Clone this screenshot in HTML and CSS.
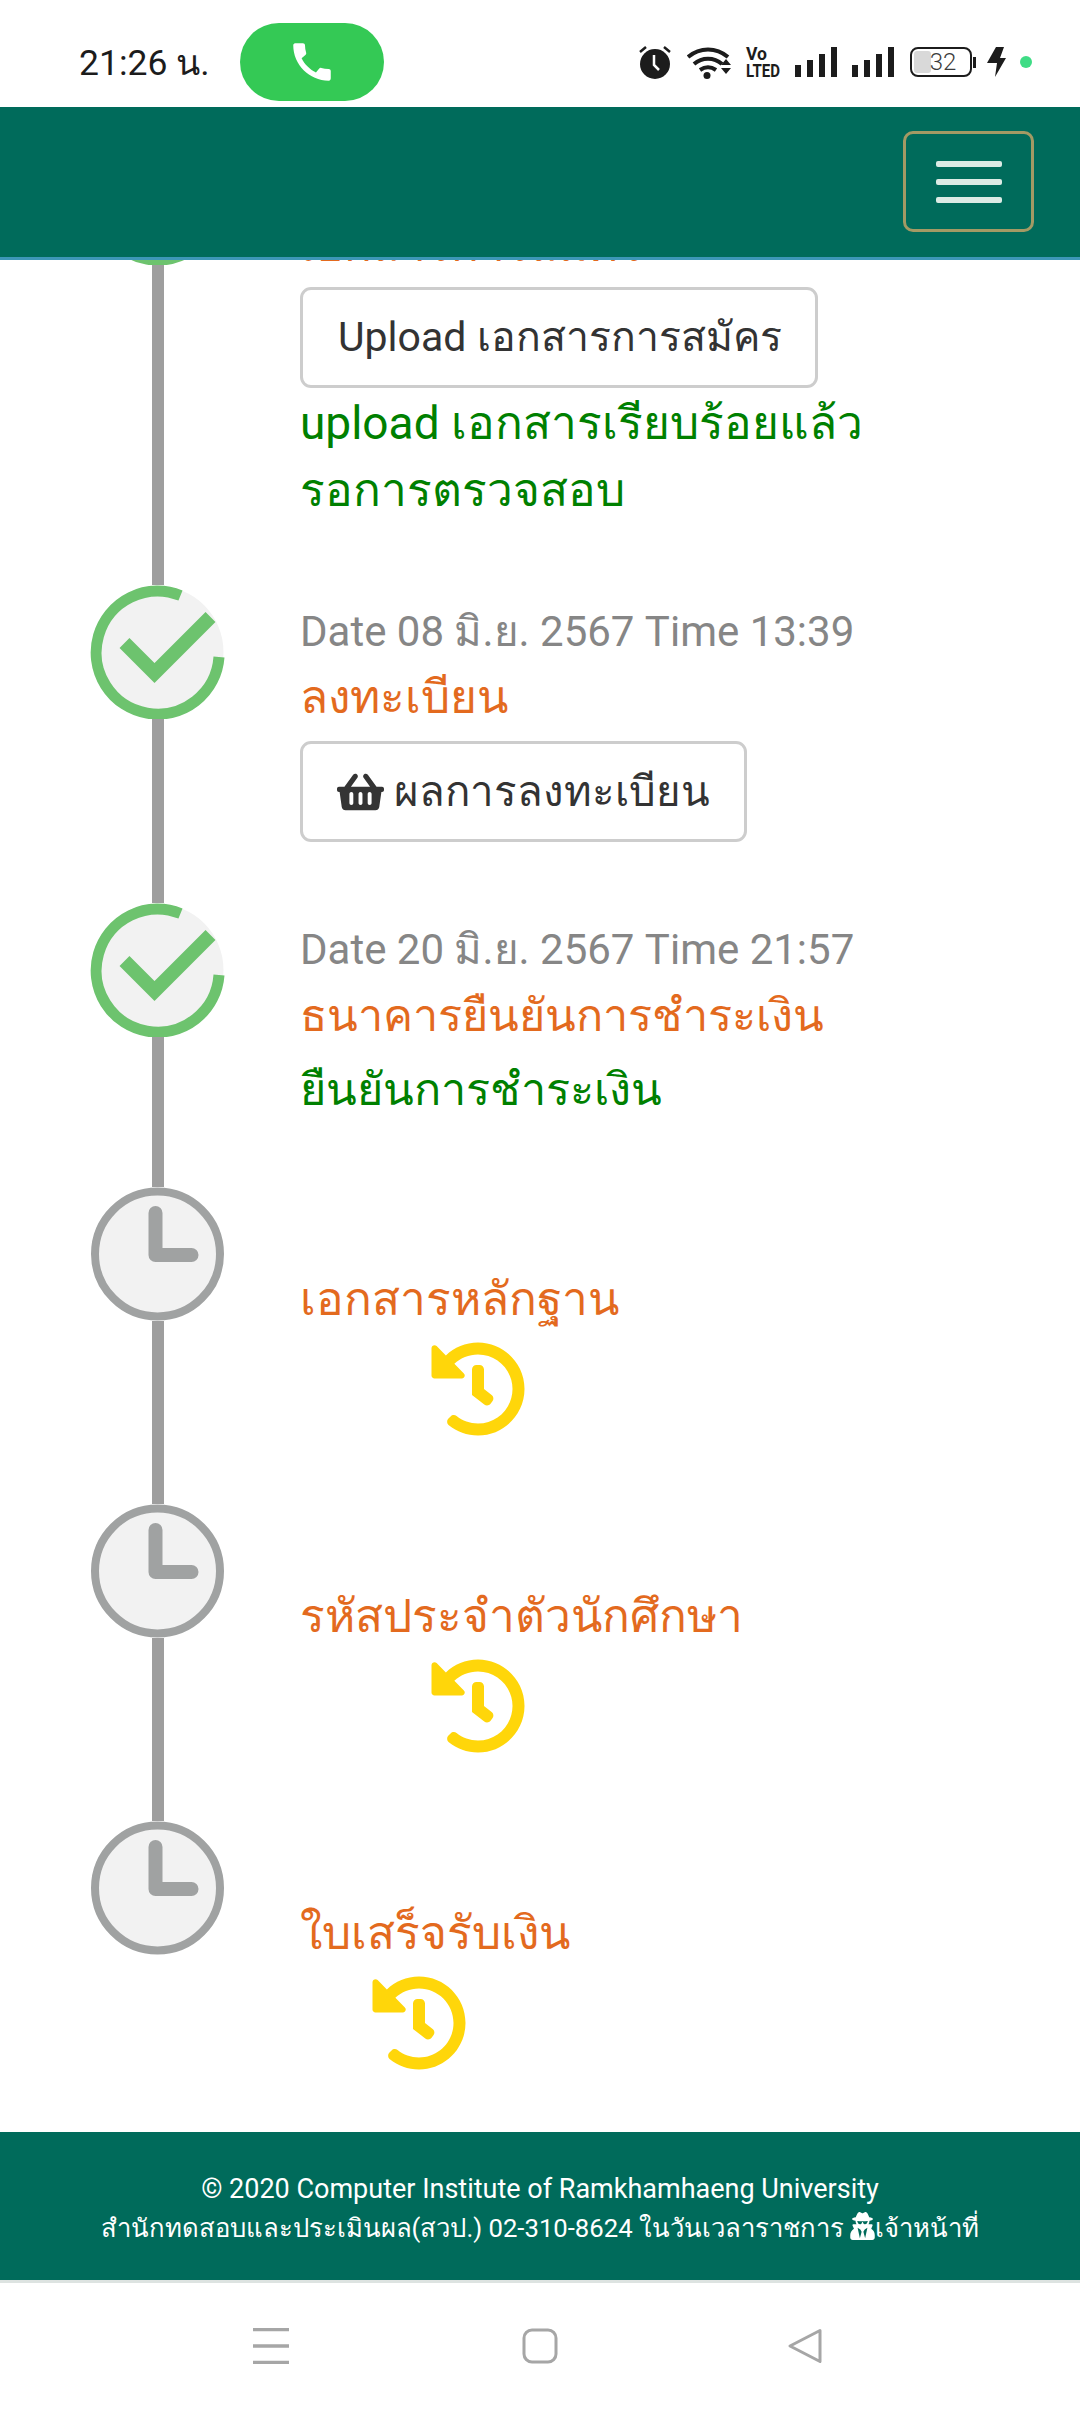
FILE: index.html
```html
<!DOCTYPE html>
<html lang="th">
<head>
<meta charset="utf-8">
<title>Timeline</title>
<link rel="stylesheet" href="styles.css">
</head>
<body>
<div class="status">
  <span class="time">21:26 น.</span>
  <span class="call"><svg class="call-ic" viewBox="0 0 24 24"><path fill="#fff" d="M20.01 15.38c-1.23 0-2.42-.2-3.53-.56-.35-.12-.74-.03-1.01.24l-1.57 1.97c-2.83-1.35-5.48-3.9-6.89-6.83l1.95-1.66c.27-.28.35-.67.24-1.02-.37-1.11-.56-2.3-.56-3.53 0-.54-.45-.99-.99-.99H4.19C3.65 3 3 3.24 3 3.99 3 13.28 10.73 21 20.01 21c.71 0 .99-.63.99-1.18v-3.45c0-.54-.45-.99-.99-.99z"/></svg></span>
  <div class="sys">
    <svg class="ic-alarm" viewBox="0 0 32 33"><circle cx="16" cy="18" r="15" fill="#1c1c1c"/><path d="M1 6l6-5M31 6l-6-5" stroke="#1c1c1c" stroke-width="2.5"/><path d="M15 9v10l5 5" fill="none" stroke="#fff" stroke-width="2.5"/></svg>
    <svg class="ic-wifi" viewBox="0 0 45 33"><path d="M1 11C13 1 29 1 41 11M7 18c8-7 20-7 28 0M13 24c5-3.500 11-3.500 16 0" fill="none" stroke="#1c1c1c" stroke-width="4"/><circle cx="20" cy="29.500" r="3.500" fill="#1c1c1c"/><path d="M34 19l5-6 5 6zM34 22l5 6 5-6z" fill="#1c1c1c"/></svg>
    <svg class="ic-volte" viewBox="0 -3 34 36"><text x="0" y="13" class="volte-t" textLength="21" lengthAdjust="spacingAndGlyphs">Vo</text><text x="0" y="30" class="volte-t" textLength="34" lengthAdjust="spacingAndGlyphs">LTED</text></svg>
    <svg class="ic-sig" viewBox="0 0 42 30"><path d="M0 18h6v12H0zM12 13h6v17h-6zM24 7h6v23h-6zM36 0h6v30h-6z" fill="#1c1c1c"/></svg>
    <svg class="ic-sig" viewBox="0 0 42 30"><path d="M0 18h6v12H0zM12 13h6v17h-6zM24 7h6v23h-6zM36 0h6v30h-6z" fill="#1c1c1c"/></svg>
    <span class="batt"><span class="batt-fill"></span><span class="batt-num">32</span></span><span class="batt-nub"></span>
    <svg class="ic-bolt" viewBox="0 0 19 30"><path d="M9 0h8l-4 11h6L8 30l2-14H0z" fill="#1c1c1c"/></svg>
    <span class="dot"></span>
  </div>
</div>

<nav class="nav">
  <button class="toggler"><span class="bar"></span><span class="bar"></span><span class="bar"></span></button>
</nav>

<main class="main">
  <div class="timeline">
    <section class="row row-first">
      <div class="marker"><svg class="badge" viewBox="0 0 134 134"><use href="#done"/></svg><span class="line"></span></div>
      <div class="body">
        <p class="date"></p>
        <p class="title">เอกสารการสมัคร</p>
        <a class="btn btn-upload">Upload เอกสารการสมัคร</a>
        <p class="ok">upload เอกสารเรียบร้อยแล้ว<br>รอการตรวจสอบ</p>
      </div>
    </section>
    <section class="row">
      <div class="marker"><svg class="badge" viewBox="0 0 134 134"><use href="#done"/></svg><span class="line"></span></div>
      <div class="body">
        <p class="date">Date 08 มิ.ย. 2567 Time 13:39</p>
        <p class="title">ลงทะเบียน</p>
        <a class="btn"><svg class="basket" viewBox="0 0 576 512"><path fill="#343434" d="M576 216v16c0 13.255-10.745 24-24 24h-8l-26.113 182.788C514.509 462.435 494.257 480 470.37 480H105.63c-23.887 0-44.139-17.565-47.518-41.212L32 256h-8c-13.255 0-24-10.745-24-24v-16c0-13.255 10.745-24 24-24h67.341l106.78-146.821c10.395-14.292 30.407-17.453 44.701-7.058 14.293 10.395 17.453 30.408 7.058 44.701L170.477 192h235.046L326.12 82.821c-10.395-14.292-7.234-34.306 7.059-44.701 14.291-10.395 34.306-7.235 44.701 7.058L484.659 192H552c13.255 0 24 10.745 24 24zM312 392V280c0-13.255-10.745-24-24-24s-24 10.745-24 24v112c0 13.255 10.745 24 24 24s24-10.745 24-24zm112 0V280c0-13.255-10.745-24-24-24s-24 10.745-24 24v112c0 13.255 10.745 24 24 24s24-10.745 24-24zm-224 0V280c0-13.255-10.745-24-24-24s-24 10.745-24 24v112c0 13.255 10.745 24 24 24s24-10.745 24-24z"/></svg> ผลการลงทะเบียน</a>
      </div>
    </section>
    <section class="row row-paid">
      <div class="marker"><svg class="badge" viewBox="0 0 134 134"><use href="#done"/></svg><span class="line"></span></div>
      <div class="body">
        <p class="date">Date 20 มิ.ย. 2567 Time 21:57</p>
        <p class="title">ธนาคารยืนยันการชำระเงิน</p>
        <p class="ok ok-tight">ยืนยันการชำระเงิน</p>
      </div>
    </section>
    <section class="row row-wait">
      <div class="marker"><svg class="badge" viewBox="0 0 134 134"><use href="#wait"/></svg><span class="line"></span></div>
      <div class="body">
        <p class="date"></p>
        <p class="title">เอกสารหลักฐาน</p>
        <svg class="hist hist-wide" viewBox="0 0 512 512"><use href="#history"/></svg>
      </div>
    </section>
    <section class="row row-wait">
      <div class="marker"><svg class="badge" viewBox="0 0 134 134"><use href="#wait"/></svg><span class="line"></span></div>
      <div class="body">
        <p class="date"></p>
        <p class="title">รหัสประจำตัวนักศึกษา</p>
        <svg class="hist hist-wide" viewBox="0 0 512 512"><use href="#history"/></svg>
      </div>
    </section>
    <section class="row row-last">
      <div class="marker"><svg class="badge" viewBox="0 0 134 134"><use href="#wait"/></svg></div>
      <div class="body">
        <p class="date"></p>
        <p class="title">ใบเสร็จรับเงิน</p>
        <svg class="hist hist-narrow" viewBox="0 0 512 512"><use href="#history"/></svg>
      </div>
    </section>
  </div>
</main>

<footer class="foot">
  <p class="foot-line foot-en">© 2020 Computer Institute of Ramkhamhaeng University</p>
  <p class="foot-line">สำนักทดสอบและประเมินผล(สวป.) 02-310-8624 ในวันเวลาราชการ <svg class="spy" viewBox="0 0 448 512"><path fill="#fff" d="M383.9 308.3l23.9-62.6c4-10.5-3.7-21.7-15-21.7h-58.5c11-18.9 17.8-40.6 17.8-64v-.3c39.2-7.8 64-19.1 64-31.7 0-13.3-27.3-25.1-70.1-33-9.2-32.8-27-65.8-40.6-82.8-9.5-11.9-25.9-15.6-39.5-8.8l-27.6 13.8c-9 4.5-19.6 4.5-28.6 0L182.1 3.4c-13.6-6.8-30-3.1-39.5 8.8-13.5 17-31.4 50-40.6 82.8-42.7 7.9-70 19.7-70 33 0 12.6 24.8 23.9 64 31.7v.3c0 23.4 6.8 45.1 17.8 64H56.3c-11.5 0-19.2 11.7-14.7 22.3l25.8 60.2C27.3 329.8 0 372.7 0 422.4v44.8C0 491.9 20.1 512 44.8 512h358.4c24.7 0 44.8-20.1 44.8-44.8v-44.8c0-48.4-25.8-90.4-64.1-114.1zM176 480l-41.6-192 49.6 32 24 40-32 120zm96 0l-32-120 24-40 49.6-32L272 480zm41.7-298.5c-3.9 11.9-7 24.6-16.5 33.4-10.1 9.3-48 22.4-64-25-2.8-8.4-15.4-8.4-18.3 0-17 50.2-56 32.4-64 25-9.500-8.800-12.700-21.500-16.500-33.400-.8-2.500-6.300-5.700-6.300-5.800v-10.800c28.300 3.600 61 5.800 96 5.800s67.700-2.200 96-5.800v10.800c-.1.1-5.600 3.200-6.400 5.800z"/></svg>เจ้าหน้าที่</p>
</footer>

<div class="softkeys">
  <svg class="key" viewBox="0 0 36 36"><path d="M0 1.500h36M0 18h36M0 34.500h36" stroke="#a6a6a6" stroke-width="3.500"/></svg>
  <svg class="key" viewBox="0 0 36 36"><rect x="2" y="2" width="32" height="32" rx="8" fill="none" stroke="#a6a6a6" stroke-width="3"/></svg>
  <svg class="key key-back" viewBox="0 0 36 36"><path d="M33 2.500 3 18l30 15.500z" fill="none" stroke="#a6a6a6" stroke-width="3" stroke-linejoin="round"/></svg>
</div>

<svg class="defs" aria-hidden="true">
  <defs>
    <g id="done">
      <circle cx="67" cy="67" r="66" fill="#f2f2f2"/>
      <path d="M128.500 72A61.500 61.500 0 1 1 90 10.500" fill="none" stroke="#6dc36e" stroke-width="11"/>
      <path d="M34 58 64 88 120 32" fill="none" stroke="#6dc36e" stroke-width="14"/>
    </g>
    <g id="wait">
      <circle cx="67" cy="67" r="62.500" fill="#f2f2f2" stroke="#a0a2a2" stroke-width="8"/>
      <path d="M65 26V68H101" fill="none" stroke="#a0a2a2" stroke-width="14" stroke-linecap="round" stroke-linejoin="round"/>
    </g>
    <path id="history" fill="#ffd60a" d="M504 255.531c.253 136.64-111.18 248.372-247.82 248.468-59.015.042-113.223-20.53-155.822-54.911-11.077-8.94-11.905-25.541-1.839-35.607l11.267-11.267c8.609-8.609 22.353-9.551 31.891-1.984C173.062 425.135 212.781 440 256 440c101.705 0 184-82.311 184-184 0-101.705-82.311-184-184-184-48.814 0-93.149 18.969-126.068 49.932l50.754 50.754c10.08 10.08 2.941 27.314-11.313 27.314H24c-8.837 0-16-7.163-16-16V38.627c0-14.254 17.234-21.393 27.314-11.314l49.372 49.372C129.209 34.136 189.552 8 256 8c136.81 0 247.747 110.78 248 247.531zm-180.912 78.784l9.823-12.63c8.138-10.463 6.253-25.542-4.21-33.679L288 256.349V152c0-13.255-10.745-24-24-24h-16c-13.255 0-24 10.745-24 24v135.651l65.409 50.874c10.463 8.137 25.541 6.253 33.679-4.21z"/>
  </defs>
</svg>
</body>
</html>
```
FILE: styles.css
```css
* { box-sizing: border-box; }
html, body { margin: 0; padding: 0; }
body {
  width: 1080px;
  height: 2412px;
  display: flex;
  flex-direction: column;
  overflow: hidden;
  background: #fff;
  font-family: Roboto, "Noto Sans", "Noto Sans CJK SC", sans-serif;
  color: #333;
}
p { margin: 0; }

/* status bar */
.status {
  height: 107px;
  flex: none;
  display: flex;
  align-items: center;
  padding-left: 79px;
  padding-top: 17px;
}
.time { font-size: 35.5px; color: #1c1c1c; width: 161px; white-space: nowrap; }
.call {
  width: 144px;
  height: 78px;
  border-radius: 39px;
  background: #34c955;
  display: flex;
  align-items: center;
  justify-content: center;
}
.call-ic { width: 50px; height: 50px; }
.sys {
  margin-left: auto;
  padding-right: 48px;
  display: flex;
  align-items: center;
}
.ic-alarm { width: 32px; height: 33px; margin-right: 16px; }
.ic-wifi { width: 45px; height: 33px; margin-right: 14px; }
.ic-volte { width: 34px; height: 36px; margin-right: 15px; overflow: visible; }
.volte-t { font-size: 19px; font-weight: 700; fill: #1c1c1c; }
.ic-sig { width: 42px; height: 30px; margin-right: 15px; }
.batt {
  width: 62px;
  height: 30px;
  border: 2.5px solid #1c1c1c;
  border-radius: 8px;
  margin-left: 1px;
  display: flex;
  align-items: center;
  justify-content: center;
  overflow: hidden;
  padding: 2px;
}
.batt-fill { flex: none; width: 17px; height: 100%; background: #d9d9d9; border-radius: 3px; margin-right: -17px; }
.batt-num { flex: 1; text-align: center; font-size: 24px; line-height: 24px; color: #3c3c3c; font-weight: 300; padding-left: 4px; }
.batt-nub { width: 3px; height: 11px; background: #1c1c1c; margin: 0 11px 0 1px; }
.ic-bolt { width: 19px; height: 30px; margin-right: 14px; }
.dot { width: 12px; height: 12px; border-radius: 50%; background: #3fdc85; }

/* navbar */
.nav {
  height: 153px;
  flex: none;
  background: #006b5b;
  border-bottom: 3px solid #3d97b8;
  display: flex;
  justify-content: flex-end;
  align-items: flex-start;
  padding: 24px 46px 0 0;
  position: relative;
  z-index: 1;
}
.toggler {
  width: 131px;
  height: 101px;
  padding: 0;
  background: transparent;
  border: 3px solid #a39a64;
  border-radius: 10px;
  display: flex;
  flex-direction: column;
  align-items: center;
  justify-content: center;
  gap: 12px;
}
.bar { width: 66px; height: 6px; border-radius: 2px; background: #dcebe5; }

/* timeline */
.main { flex: none; height: 1872px; overflow: hidden; }
.timeline { margin-top: -129px; }
.row { display: flex; }
.marker {
  width: 135px;
  margin-left: 90px;
  flex: none;
  display: flex;
  flex-direction: column;
  align-items: center;
}
.badge { width: 135px; height: 134px; flex: none; display: block; filter: blur(0.6px); }
.line { width: 12px; flex: 1; background: #9e9e9e; }
.body { margin-left: 75px; padding-top: 15px; padding-bottom: 61px; }
.row-paid .body { padding-bottom: 64px; }
.row-wait .body { padding-bottom: 67px; }
.row-last .body { padding-bottom: 0; }
.row-last { height: 309px; }
.date { height: 63px; font-size: 42px; line-height: 63px; color: #868686; white-space: nowrap; }
.title { margin-top: 1px; font-size: 46px; line-height: 67px; color: #e36a1e; white-space: nowrap; }
.row-paid .title { font-size: 45px; }
.row-first .title { margin-top: 3px; }
.btn {
  display: inline-block;
  margin-top: 10px;
  height: 101px;
  padding: 0 34px;
  border: 3px solid #cdcdcd;
  border-radius: 11px;
  font-size: 42px;
  line-height: 95px;
  color: #333;
  white-space: nowrap;
}
.row-first .btn { margin-top: 8px; }
.btn-upload { padding: 0 33px 0 35px; font-size: 41px; }
.basket { width: 47px; height: 42px; vertical-align: -7px; }
.ok { margin-top: 2px; font-size: 46px; line-height: 67px; color: #008000; white-space: nowrap; }
.ok-tight { margin-top: 7px; font-size: 45px; }
.hist { display: block; width: 96px; height: 96px; margin-top: 8px; }
.hist-wide { margin-left: 130px; }
.hist-narrow { margin-left: 71px; }

/* footer */
.foot {
  height: 148px;
  flex: none;
  background: #006b5b;
  color: #fff;
  display: flex;
  flex-direction: column;
  align-items: center;
  justify-content: center;
  padding-top: 5px;
  font-size: 25.7px;
  line-height: 39px;
}
.foot-en { font-size: 27px; }
.foot-line { white-space: nowrap; }
.spy { width: 25px; height: 28px; vertical-align: -3px; }

/* android keys */
.softkeys {
  flex: 1;
  border-top: 3px solid #dde3e1;
  display: flex;
  justify-content: center;
  gap: 233px;
  padding-top: 45px;
}
.key { width: 36px; height: 36px; }
.key-back { margin-left: -4px; margin-right: 4px; }
.defs { width: 0; height: 0; flex: none; }
```
